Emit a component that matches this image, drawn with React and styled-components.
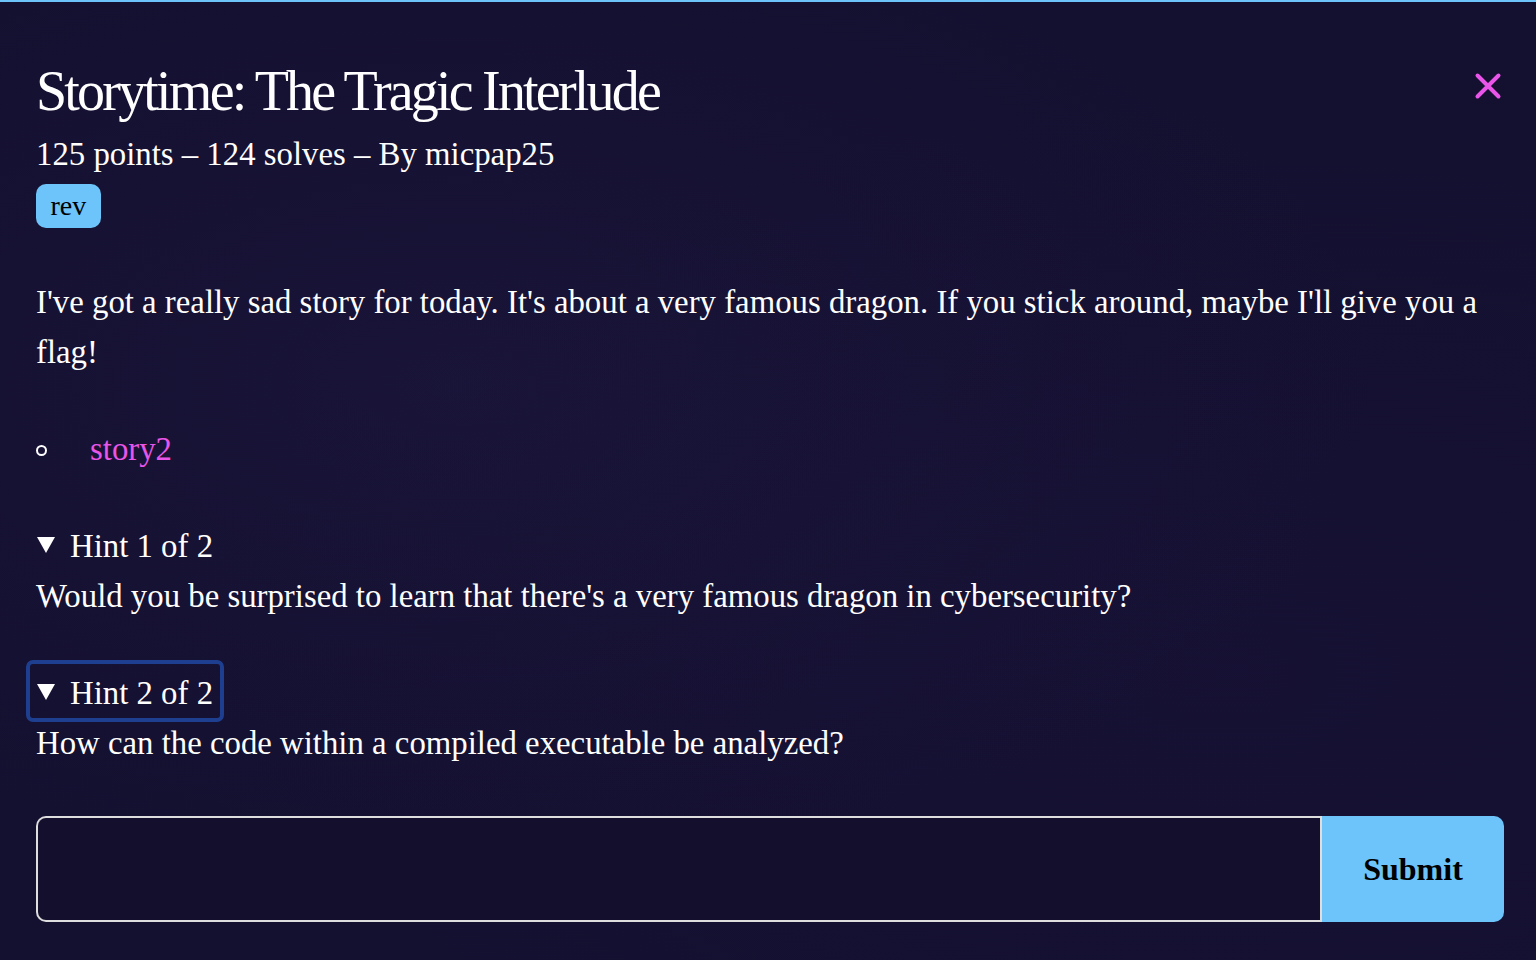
import React from "react";
import styled, { createGlobalStyle } from "styled-components";

const GlobalStyle = createGlobalStyle`
  html, body {
    margin: 0;
    padding: 0;
    background: #141030;
  }
  body {
    font-family: "Liberation Serif", "Times New Roman", serif;
    color: #ffffff;
  }
`;

const Page = styled.div`
  min-height: 960px;
  box-sizing: border-box;
  border-top: 2px solid #6cc4fa;
  background:
    radial-gradient(ellipse at 30% 40%, rgba(36, 30, 74, 0.3), transparent 60%),
    radial-gradient(ellipse at 80% 70%, rgba(28, 22, 64, 0.25), transparent 60%),
    #141030;
  padding: 56px 32px 0 36px;
  font-size: 32.8px;
`;

const Header = styled.div`
  display: flex;
  justify-content: space-between;
  align-items: flex-start;
`;

const Title = styled.h1`
  margin: 0;
  font-size: 56px;
  font-weight: normal;
  letter-spacing: -2.8px;
  line-height: 66px;
`;

const CloseButton = styled.button`
  background: none;
  border: none;
  padding: 0;
  margin-top: 14px;
  width: 30px;
  height: 30px;
  cursor: pointer;
`;

const Meta = styled.div`
  line-height: 40px;
  margin-top: 10px;
`;

const Tag = styled.div`
  width: fit-content;
  margin-top: 10px;
  background: #6cc4fa;
  color: #000;
  font-size: 28px;
  line-height: 44px;
  padding: 0 14.5px;
  border-radius: 10px;
`;

const Description = styled.p`
  line-height: 50px;
  margin: 49px 0 0;
`;

const FileList = styled.ul`
  margin: 47px 0 0;
  padding: 0;
  list-style: none;
  line-height: 50px;
`;

const FileItem = styled.li`
  display: flex;
  align-items: center;
  gap: 43px;
  &::before {
    content: "";
    width: 7px;
    height: 7px;
    border: 2px solid #fff;
    border-radius: 50%;
    margin-top: 2px;
  }
`;

const FileLink = styled.a`
  color: #e855e8;
  text-decoration: none;
`;

const Hint = styled.details`
  margin-top: 43px;
`;

const HintSummary = styled.summary`
  display: flex;
  align-items: center;
  width: fit-content;
  list-style: none;
  line-height: 50px;
  padding: 4px 7px 0 6px;
  margin-left: -6px;
  outline: ${p => (p.$focused ? "4px solid #1e3f8f" : "none")};
  border-radius: 3px;
  cursor: pointer;
  &::-webkit-details-marker {
    display: none;
  }
`;

const Arrow = styled.span`
  width: 0;
  height: 0;
  border-left: 9px solid transparent;
  border-right: 9px solid transparent;
  border-top: 16px solid #fff;
  margin: -2px 15px 0 1px;
`;

const HintBody = styled.div`
  line-height: 50px;
`;

const FlagForm = styled.form`
  display: flex;
  margin-top: 48px;
  width: 1468px;
  height: 106px;
`;

const FlagInput = styled.input`
  flex: 1;
  box-sizing: border-box;
  background: #130f2c;
  border: 2px solid #dedede;
  border-right: none;
  border-radius: 10px 0 0 10px;
  color: #fff;
  font-size: 28px;
  font-family: inherit;
  padding: 0 20px;
  outline: none;
`;

const SubmitButton = styled.button`
  width: 184px;
  border: none;
  border-left: 2px solid #dedede;
  background: #6cc4fa;
  border-radius: 0 10px 10px 0;
  font-family: "Liberation Serif", "Times New Roman", serif;
  font-weight: bold;
  font-size: 32px;
  color: #000;
  cursor: pointer;
`;

const hints = [
  "Would you be surprised to learn that there's a very famous dragon in cybersecurity?",
  "How can the code within a compiled executable be analyzed?",
];

export default function App() {
  return (
    <Page>
      <GlobalStyle />
      <Header>
        <div>
          <Title>Storytime: The Tragic Interlude</Title>
          <Meta>125 points – 124 solves – By micpap25</Meta>
          <Tag>rev</Tag>
        </div>
        <CloseButton aria-label="Close">
          <svg width="30" height="30" viewBox="0 0 30 30">
            <path d="M3.5 3.5 L24.5 24.5 M24.5 3.5 L3.5 24.5" stroke="#e855e8" strokeWidth="4" strokeLinecap="round" />
          </svg>
        </CloseButton>
      </Header>
      <Description>
        I've got a really sad story for today. It's about a very famous dragon. If you stick around, maybe I'll give you a flag!
      </Description>
      <FileList>
        <FileItem>
          <FileLink href="#">story2</FileLink>
        </FileItem>
      </FileList>
      {hints.map((text, i) => (
        <Hint key={i} open>
          <HintSummary $focused={i === 1}>
            <Arrow />Hint {i + 1} of {hints.length}
          </HintSummary>
          <HintBody>{text}</HintBody>
        </Hint>
      ))}
      <FlagForm onSubmit={e => e.preventDefault()}>
        <FlagInput type="text" />
        <SubmitButton type="submit">Submit</SubmitButton>
      </FlagForm>
    </Page>
  );
}
